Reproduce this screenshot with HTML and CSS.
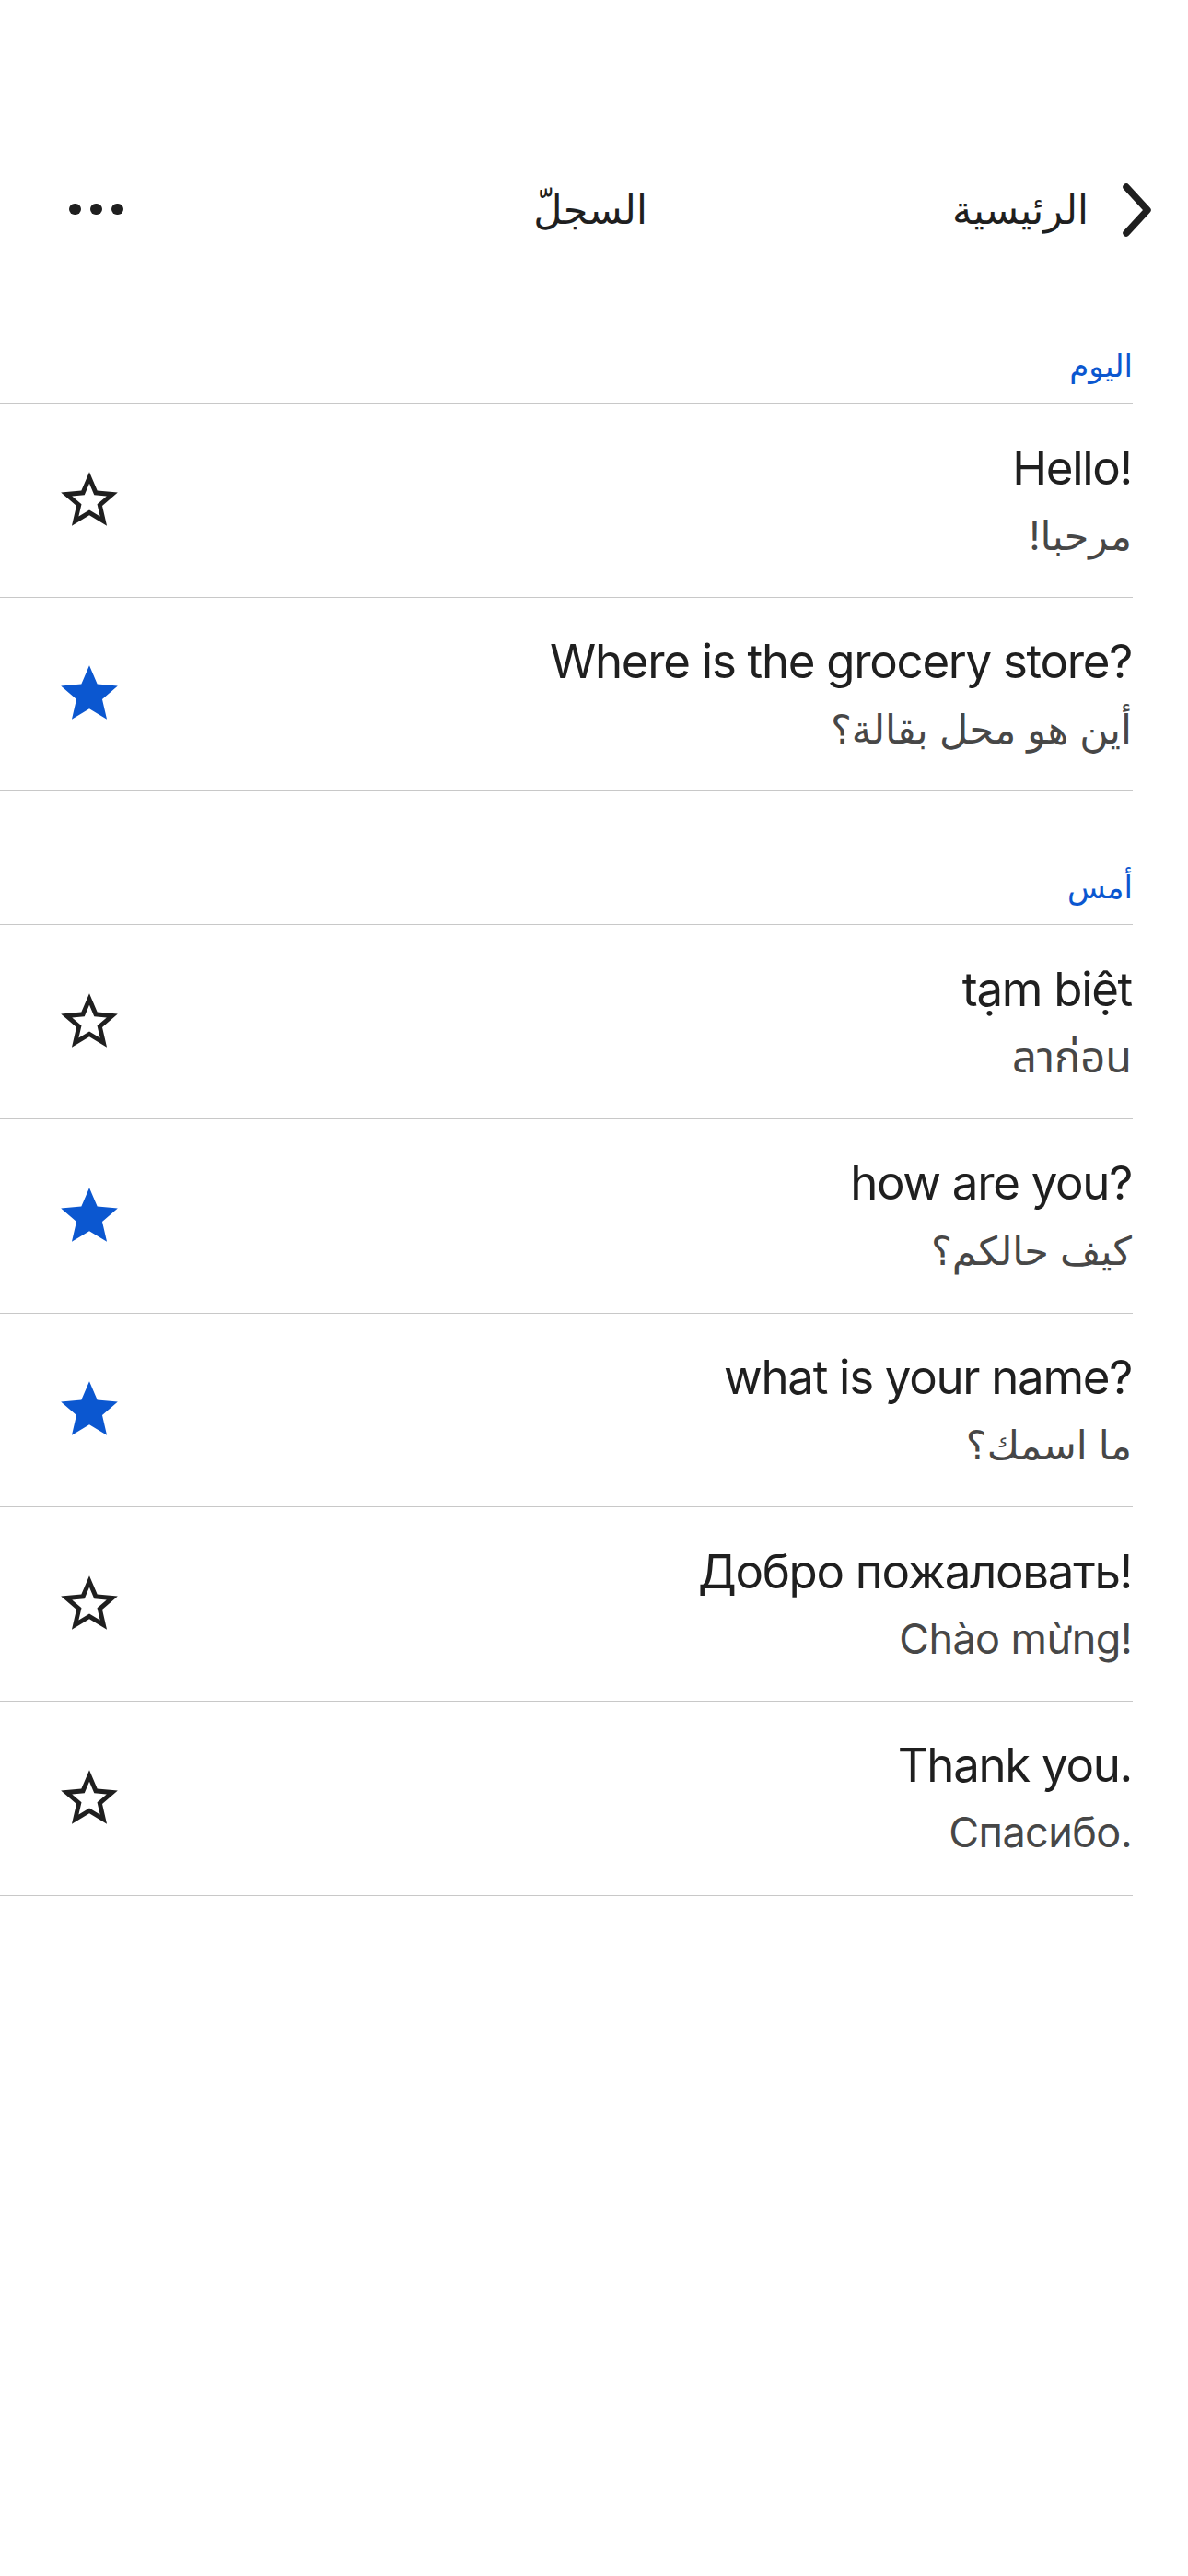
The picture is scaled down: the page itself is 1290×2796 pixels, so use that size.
FILE: index.html
```html
<!DOCTYPE html>
<html lang="ar" dir="rtl">
<head>
<meta charset="utf-8">
<title>السجلّ</title>
<link rel="stylesheet" href="styles.css">
</head>
<body>
<header class="nav">
  <a class="back" href="#">
    <svg class="chev" width="36" height="60" viewBox="0 0 36 60" aria-hidden="true"><polyline points="7,6 30,31 7,56" fill="none" stroke="#1f1f1f" stroke-width="7.5" stroke-linecap="round" stroke-linejoin="round"/></svg>
    <span class="back-label">الرئيسية</span>
  </a>
  <h1 class="title">السجلّ</h1>
  <button class="more" aria-label="المزيد"><span class="dot"></span><span class="dot"></span><span class="dot"></span></button>
</header>

<main class="history">
  <section class="group">
    <h2 class="group-title">اليوم</h2>
    <ul class="list">
      <li class="item">
        <div class="texts"><p class="src" dir="auto">Hello!</p><p class="tr ar" dir="auto">مرحبا!</p></div>
        <button class="star" aria-label="star"><svg width="74" height="74" viewBox="0 0 24 24"><path class="star-line" d="M22 9.24l-7.19-.62L12 2 9.19 8.63 2 9.24l5.46 4.73L5.82 21 12 17.27 18.18 21l-1.63-7.03L22 9.24zM12 15.4l-3.76 2.27 1-4.28-3.32-2.88 4.38-.38L12 6.1l1.71 4.04 4.38.38-3.32 2.88 1 4.28L12 15.4z"/></svg></button>
      </li>
      <li class="item">
        <div class="texts"><p class="src" dir="auto">Where is the grocery store?</p><p class="tr ar" dir="auto">أين هو محل بقالة؟</p></div>
        <button class="star" aria-label="star"><svg width="74" height="74" viewBox="0 0 24 24"><path class="star-fill" d="M12 17.27L18.18 21l-1.64-7.03L22 9.24l-7.19-.61L12 2 9.19 8.63 2 9.24l5.46 4.73L5.82 21z"/></svg></button>
      </li>
    </ul>
  </section>

  <section class="group">
    <h2 class="group-title">أمس</h2>
    <ul class="list">
      <li class="item">
        <div class="texts"><p class="src" dir="auto">tạm biệt</p><p class="tr th" dir="auto">ลาก่อน</p></div>
        <button class="star" aria-label="star"><svg width="74" height="74" viewBox="0 0 24 24"><path class="star-line" d="M22 9.24l-7.19-.62L12 2 9.19 8.63 2 9.24l5.46 4.73L5.82 21 12 17.27 18.18 21l-1.63-7.03L22 9.24zM12 15.4l-3.76 2.27 1-4.28-3.32-2.88 4.38-.38L12 6.1l1.71 4.04 4.38.38-3.32 2.88 1 4.28L12 15.4z"/></svg></button>
      </li>
      <li class="item">
        <div class="texts"><p class="src" dir="auto">how are you?</p><p class="tr ar" dir="auto">كيف حالكم؟</p></div>
        <button class="star" aria-label="star"><svg width="74" height="74" viewBox="0 0 24 24"><path class="star-fill" d="M12 17.27L18.18 21l-1.64-7.03L22 9.24l-7.19-.61L12 2 9.19 8.63 2 9.24l5.46 4.73L5.82 21z"/></svg></button>
      </li>
      <li class="item">
        <div class="texts"><p class="src" dir="auto">what is your name?</p><p class="tr ar" dir="auto">ما اسمك؟</p></div>
        <button class="star" aria-label="star"><svg width="74" height="74" viewBox="0 0 24 24"><path class="star-fill" d="M12 17.27L18.18 21l-1.64-7.03L22 9.24l-7.19-.61L12 2 9.19 8.63 2 9.24l5.46 4.73L5.82 21z"/></svg></button>
      </li>
      <li class="item">
        <div class="texts"><p class="src" dir="auto">Добро пожаловать!</p><p class="tr" dir="auto">Chào mừng!</p></div>
        <button class="star" aria-label="star"><svg width="74" height="74" viewBox="0 0 24 24"><path class="star-line" d="M22 9.24l-7.19-.62L12 2 9.19 8.63 2 9.24l5.46 4.73L5.82 21 12 17.27 18.18 21l-1.63-7.03L22 9.24zM12 15.4l-3.76 2.27 1-4.28-3.32-2.88 4.38-.38L12 6.1l1.71 4.04 4.38.38-3.32 2.88 1 4.28L12 15.4z"/></svg></button>
      </li>
      <li class="item">
        <div class="texts"><p class="src" dir="auto">Thank you.</p><p class="tr" dir="auto">Спасибо.</p></div>
        <button class="star" aria-label="star"><svg width="74" height="74" viewBox="0 0 24 24"><path class="star-line" d="M22 9.24l-7.19-.62L12 2 9.19 8.63 2 9.24l5.46 4.73L5.82 21 12 17.27 18.18 21l-1.63-7.03L22 9.24zM12 15.4l-3.76 2.27 1-4.28-3.32-2.88 4.38-.38L12 6.1l1.71 4.04 4.38.38-3.32 2.88 1 4.28L12 15.4z"/></svg></button>
      </li>
    </ul>
  </section>
</main>
</body>
</html>
```

FILE: styles.css
```css
* {
  box-sizing: border-box;
  margin: 0;
  padding: 0;
}

html {
  background: #ffffff;
}

body {
  margin: 0;
  width: 1290px;
  min-height: 2796px;
  padding-top: 161px;
  background: #ffffff;
  color: #1f1f1f;
  font-family: "Inter", "DejaVu Sans", "Noto Sans Thai", "Noto Sans", sans-serif;
}

/* navigation bar */
.nav {
  height: 132px;
  display: grid;
  grid-template-columns: 1fr auto 1fr;
  align-items: center;
}

.back {
  justify-self: start;
  display: flex;
  align-items: center;
  gap: 34px;
  margin-right: 38px;
  color: #1f1f1f;
  text-decoration: none;
  font-size: 43px;
  line-height: 60px;
}

.chev {
  display: block;
}

.title {
  font-size: 43px;
  font-weight: 400;
  line-height: 60px;
  color: #1f1f1f;
  margin-right: 8px;
}

.more {
  justify-self: end;
  display: flex;
  gap: 10.5px;
  margin-left: 75px;
  background: none;
  border: 0;
  direction: ltr;
}

.dot {
  width: 12.5px;
  height: 12.5px;
  border-radius: 50%;
  background: #1f1f1f;
}

/* history list */
.list {
  list-style: none;
}

.group-title {
  height: 145px;
  display: flex;
  align-items: flex-end;
  margin-right: 60px;
  padding-bottom: 18px;
  border-bottom: 1px solid #c8c8c8;
  color: #0b57d0;
  font-size: 34px;
  font-weight: 400;
  line-height: 44px;
}

.item {
  height: 210.67px;
  display: flex;
  align-items: flex-start;
  justify-content: space-between;
  margin-right: 60px;
  border-bottom: 1px solid #c8c8c8;
}

.texts {
  padding-top: 38.5px;
  padding-right: 1px;
  text-align: right;
}

.src {
  font-size: 51px;
  line-height: 62px;
  letter-spacing: -1.3px;
  color: #1f1f1f;
  text-align: right;
  white-space: nowrap;
}

.tr {
  margin-top: 14px;
  font-size: 45px;
  line-height: 56px;
  letter-spacing: -0.6px;
  color: #474747;
  text-align: right;
  white-space: nowrap;
}

.tr.ar {
  font-size: 43px;
  letter-spacing: 0;
}

.tr.th {
  letter-spacing: 0;
  font-size: 47px;
}

.star {
  align-self: center;
  margin-left: 60px;
  background: none;
  border: 0;
  display: block;
}

.star svg {
  display: block;
}

.star-line {
  fill: #1f1f1f;
}

.star-fill {
  fill: #0b57d0;
}
```
